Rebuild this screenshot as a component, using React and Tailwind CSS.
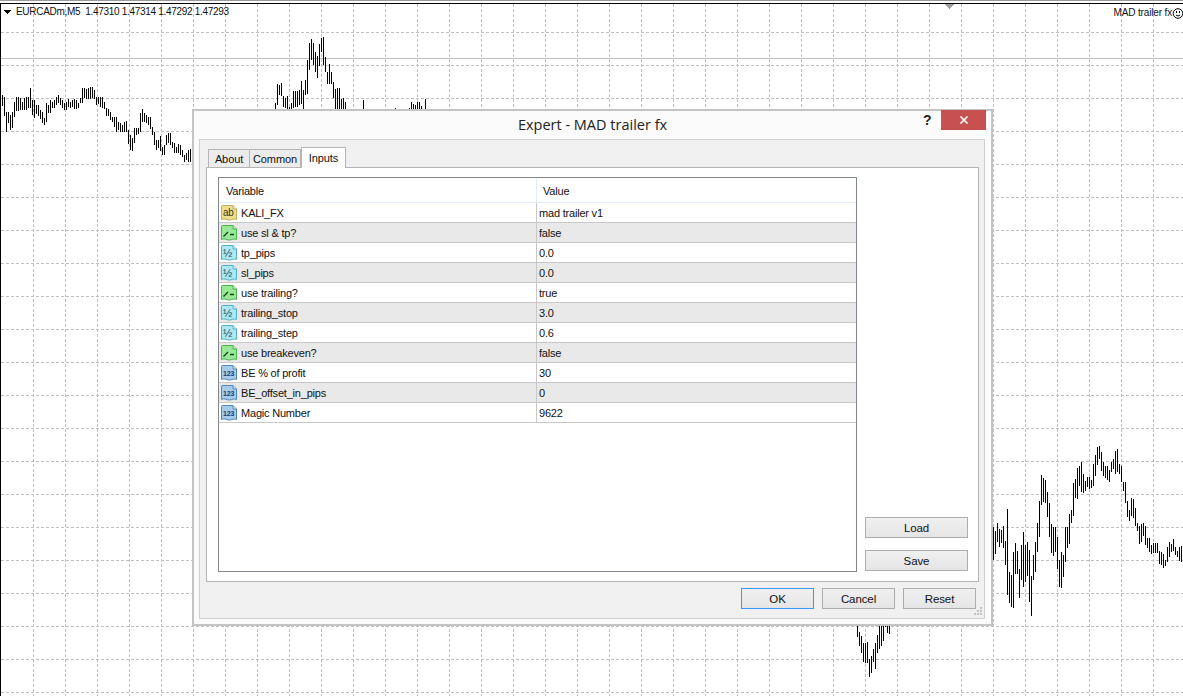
import React from 'react';

const tahoma = "font-['Liberation_Sans',Arial,sans-serif]";

// bars read off the chart as [x, top, bottom] in zoomed units (3x), with a crop origin
const toBars = (ox, oy, list) =>
  list.map(([x, t, b]) => ({ x: Math.round(ox + x / 3), t: oy + t / 3, b: oy + b / 3 }));

const step = (start, pairs) => pairs.map(([t, b], i) => [start + i * 6, t, b]);

const bars = [
  ...toBars(0, 0, step(5, [
    [285, 318], [290, 348], [335, 395], [335, 370], [345, 390], [335, 385], [305, 350], [290, 333], [290, 333], [295, 330],
    [305, 330], [295, 330], [292, 330], [292, 325], [265, 325], [300, 345], [300, 353], [315, 343], [315, 348], [330, 358],
    [335, 370], [355, 375], [310, 365], [315, 340], [300, 340], [305, 325], [300, 325], [290, 315], [285, 310], [295, 315],
    [300, 325], [310, 330], [305, 330], [298, 320], [305, 325], [300, 322], [298, 328], [300, 328], [310, 325], [295, 310],
    [265, 310], [265, 295], [268, 297], [265, 297], [262, 297], [262, 295], [270, 298], [292, 315], [292, 312], [292, 320],
    [292, 325], [305, 328], [325, 348], [328, 348], [335, 360], [350, 365], [352, 380], [350, 395], [365, 390], [370, 395],
    [375, 395], [365, 397], [362, 395], [390, 432], [405, 450], [415, 452], [385, 430], [385, 405], [385, 403], [340, 395],
    [328, 365], [340, 365], [345, 370], [350, 375], [350, 388], [380, 405], [395, 435], [420, 450], [420, 445], [408, 452],
    [440, 465], [435, 465], [405, 435], [400, 430], [400, 435], [425, 445], [430, 458], [440, 460], [432, 460], [435, 465],
    [450, 470], [465, 485], [460, 480], [450, 485], [448, 485],
  ])),
  ...toBars(260, 30, [
    [46, 220, 237], [52, 163, 225], [58, 165, 195], [64, 160, 197], [70, 197, 232], [76, 203, 235], [82, 197, 237], [88, 230, 237],
    [94, 220, 237], [100, 183, 235], [106, 183, 230], [112, 182, 232], [118, 180, 225], [124, 153, 222], [130, 180, 237], [136, 150, 195],
    [142, 90, 193], [148, 40, 120], [154, 28, 90], [160, 38, 105], [166, 65, 125], [172, 78, 143], [178, 42, 108], [184, 25, 65],
    [190, 22, 105], [196, 80, 125], [202, 125, 162], [208, 102, 162], [214, 125, 162], [220, 155, 205], [226, 178, 237], [232, 175, 237],
    [238, 175, 237], [244, 207, 237], [250, 203, 237], [256, 215, 237], [310, 210, 237], [406, 233, 237], [448, 233, 237], [454, 216, 237],
    [460, 222, 237], [466, 225, 237], [472, 216, 237], [478, 216, 237], [484, 228, 237], [496, 207, 237],
  ]),
  ...toBars(990, 430, step(10, [
    [290, 390], [303, 373], [278, 335], [297, 350], [300, 338], [288, 355], [333, 405], [238, 495], [427, 520], [435, 530],
    [365, 535], [340, 433], [362, 433], [418, 505], [345, 450], [307, 470], [345, 455], [337, 438], [360, 517], [438, 557],
    [375, 450], [337, 427], [280, 367], [213, 322], [135, 225], [145, 215], [150, 220], [187, 260], [220, 322], [282, 368],
    [290, 377], [290, 365], [320, 418], [390, 470], [366, 473], [375, 442], [292, 397], [292, 355], [252, 342], [240, 278],
    [158, 257], [147, 205], [113, 207], [108, 167], [97, 187], [132, 190], [152, 182], [142, 172], [142, 177], [150, 175],
    [102, 168], [75, 138], [50, 105], [48, 88], [67, 122], [97, 137], [107, 145], [107, 150], [120, 155], [97, 127],
    [88, 118], [62, 132], [57, 125], [103, 132], [107, 155], [155, 182], [155, 220], [213, 262], [240, 272], [205, 258],
    [207, 265], [235, 288], [278, 302], [288, 342], [283, 335], [280, 318], [287, 345], [325, 355], [325, 365], [345, 373],
    [340, 370], [340, 368], [340, 370], [362, 402], [365, 405], [372, 413], [390, 408], [352, 395], [335, 380], [342, 365],
    [328, 362], [350, 375], [362, 382], [350, 392], [348, 397],
  ])),
  ...toBars(780, 610, step(232, [
    [48, 80], [65, 108], [78, 128], [98, 155], [98, 158], [97, 160], [148, 200], [138, 188], [117, 155], [98, 177],
    [75, 128], [48, 117], [48, 107], [48, 92], [48, 50], [48, 68], [48, 72],
  ])),
];

const vLines = Array.from({ length: 36 }, (_, i) => 33 + i * 32);
const hLines = Array.from({ length: 21 }, (_, i) => 32 + i * 33);

function Chart() {
  return (
    <svg className="absolute inset-0" width="1183" height="696" shapeRendering="crispEdges">
      <rect x="0" y="0" width="1183" height="1" fill="#9a9a9a" />
      <rect x="0" y="3" width="1183" height="1" fill="#000" />
      <rect x="0" y="3" width="1" height="693" fill="#000" />
      {vLines.map((x) => (
        <line key={x} x1={x + 0.5} y1="4" x2={x + 0.5} y2="696" stroke="#c0c0c0" strokeDasharray="3 2" />
      ))}
      {hLines.map((y) => (
        <line key={y} x1="1" y1={y + 0.5} x2="1183" y2={y + 0.5} stroke="#c0c0c0" strokeDasharray="3 2" />
      ))}
      <line x1="1" y1="58.5" x2="1183" y2="58.5" stroke="#c0c0c0" />
      {bars.map((b, i) => (
        <line key={i} x1={b.x + 0.5} y1={b.t} x2={b.x + 0.5} y2={b.b} stroke="#000" />
      ))}
      <polygon points="945,4 954,4 949.5,9" fill="#a0a0a0" />
      <polygon points="4,10 11,10 7.5,14" fill="#000" />
    </svg>
  );
}

function FileIcon({ fill, edge, children }) {
  return (
    <svg width="16" height="16" viewBox="0 0 16 16" className="shrink-0">
      <path
        d="M.5 1.5q0-1 1-1h10.5l3.5 3.5v10.5q-1.8-1-3.6-.3t-3.4.8-3.7-.8-4.3.3z"
        fill={fill}
        stroke={edge}
      />
      <path d="M12 .5v3.5h3.5" fill="#ffffffa0" stroke={edge} />
      {children}
    </svg>
  );
}

const iconText = "font-['Liberation_Sans',Arial,sans-serif]";

function RowIcon({ type }) {
  if (type === 'ab') {
    return (
      <FileIcon fill="#efe08e" edge="#bcae58">
        <text x="2" y="11" fontSize="10" fill="#3a3416" className={iconText}>ab</text>
      </FileIcon>
    );
  }
  if (type === 'bool') {
    return (
      <FileIcon fill="#98e898" edge="#4cb04c">
        <path d="M2.5 11.5l4.5-4.5M9 9.5h4" fill="none" stroke="#0d4d0d" strokeWidth="1.4" />
      </FileIcon>
    );
  }
  if (type === 'half') {
    return (
      <FileIcon fill="#aee8f2" edge="#52b0c6">
        <text x="2" y="11.5" fontSize="11" fill="#0f4c60" className={iconText}>½</text>
      </FileIcon>
    );
  }
  return (
    <FileIcon fill="#a9cbea" edge="#4f86bb">
      <text x="2" y="11" fontSize="7" fontWeight="700" fill="#123f70" className={iconText}>123</text>
    </FileIcon>
  );
}

const rows = [
  ['ab', 'KALI_FX', 'mad trailer v1'],
  ['bool', 'use sl & tp?', 'false'],
  ['half', 'tp_pips', '0.0'],
  ['half', 'sl_pips', '0.0'],
  ['bool', 'use trailing?', 'true'],
  ['half', 'trailing_stop', '3.0'],
  ['half', 'trailing_step', '0.6'],
  ['bool', 'use breakeven?', 'false'],
  ['num', 'BE % of profit', '30'],
  ['num', 'BE_offset_in_pips', '0'],
  ['num', 'Magic Number', '9622'],
];

function Button({ children, className }) {
  return (
    <button className={`h-[21px] border bg-gradient-to-b from-[#f0f0f0] to-[#e5e5e5] pt-[2px] text-[11.5px] tracking-[-0.1px] text-[#111] ${className}`}>
      {children}
    </button>
  );
}

export default function App() {
  return (
    <div className={`relative w-[1183px] h-[696px] overflow-hidden bg-white ${tahoma}`}>
      <Chart />

      <div className="absolute left-[16px] top-[5px] text-[10px] tracking-[-0.3px] leading-[14px] whitespace-pre text-[#111]">
        EURCADm,M5  1.47310 1.47314 1.47292 1.47293
      </div>
      <div className="absolute right-0 top-[6px] flex items-center text-[10px] tracking-[-0.15px] leading-[14px] text-[#111]">
        <span>MAD trailer fx</span>
        <svg width="11" height="13" viewBox="0 0 11 13" className="shrink-0">
          <circle cx="6" cy="6.5" r="4.8" fill="none" stroke="#000" />
          <path d="M3.8 8q2.2 2 4.4 0" fill="none" stroke="#000" />
          <rect x="4" y="4" width="1" height="2" fill="#000" />
          <rect x="7" y="4" width="1" height="2" fill="#000" />
        </svg>
      </div>

      {/* expert properties window */}
      <div className="absolute left-[192px] top-[109px] w-[801px] h-[517px] border-2 border-[#c4c4c4] bg-[#fbfbfb] flex flex-col">
        <div className="relative h-[28px] shrink-0 flex items-center justify-center">
          <span className="font-['Open_Sans',sans-serif] text-[14.5px] text-[#222]">Expert - MAD trailer fx</span>
          <span className="absolute left-[729px] top-[0px] font-['Liberation_Sans',sans-serif] font-bold text-[14px] leading-[18px] text-[#222]">?</span>
          <div className="absolute right-[5px] top-[-1px] w-[45px] h-[20px] bg-[#c75050] flex items-center justify-center">
            <svg width="10" height="10" viewBox="0 0 10 10">
              <path d="M1.5 1.5l7 7M8.5 1.5l-7 7" stroke="#fff" strokeWidth="1.7" />
            </svg>
          </div>
        </div>

        <div className="relative ml-[5px] w-[786px] h-[480px] border border-[#d0d0d0] bg-[#f0f0f0] flex flex-col pl-[6px] pt-[7px]">
          <div className="flex items-end h-[20px] pl-[2px] text-[11px] tracking-[-0.1px] text-[#111] shrink-0">
            <div className="w-[42px] h-[18px] border border-b-0 border-[#b5b5b5] bg-[#ececec] flex items-center justify-center pt-[2px]">About</div>
            <div className="w-[51px] h-[18px] border border-b-0 border-l-0 border-[#b5b5b5] bg-[#ececec] flex items-center justify-center pt-[2px]">Common</div>
            <div className="relative z-10 w-[45px] h-[21px] mb-[-1px] border border-b-0 border-[#b5b5b5] bg-white flex items-start justify-center pt-[2px]">Inputs</div>
          </div>

          <div className="h-[415px] w-[773px] border border-[#b5b5b5] bg-white flex pl-[11px] pt-[9px] pb-[9px] shrink-0">
            <div className="w-[639px] h-[395px] border border-[#82878f] flex flex-col text-[11px] tracking-[-0.2px] text-[#111] shrink-0">
              <div className="h-[25px] flex border-b border-[#e3eefa] shrink-0">
                <div className="w-[318px] pl-[7px] pt-[2px] flex items-center border-r border-[#e3eefa]">Variable</div>
                <div className="pl-[6px] pt-[2px] flex items-center">Value</div>
              </div>
              {rows.map(([type, name, value], i) => (
                <div key={name} className={`h-[20px] flex border-b border-[#c8c8c8] shrink-0 ${i % 2 ? 'bg-[#e9e9e9]' : 'bg-white'}`}>
                  <div className="w-[318px] pl-[2px] flex items-center gap-[4px] border-r border-[#c8c8c8]">
                    <RowIcon type={type} />
                    <span className="pt-[2px]">{name}</span>
                  </div>
                  <div className="pl-[2px] pt-[2px] flex items-center">{value}</div>
                </div>
              ))}
            </div>

            <div className="flex flex-col justify-end gap-[12px] ml-[8px] mb-[1px]">
              <Button className="w-[103px] border-[#adadad]">Load</Button>
              <Button className="w-[103px] border-[#adadad]">Save</Button>
            </div>
          </div>

          <div className="flex justify-end gap-[8px] pr-[8px] pt-[6px]">
            <Button className="w-[73px] border-[#3399ff]">OK</Button>
            <Button className="w-[73px] border-[#adadad]">Cancel</Button>
            <Button className="w-[73px] border-[#adadad]">Reset</Button>
          </div>

          <svg className="absolute right-[1px] bottom-[2px]" width="9" height="9" viewBox="0 0 9 9" shapeRendering="crispEdges">
            <path d="M6 0h2v2H6zM3 3h2v2H3zM6 3h2v2H6zM0 6h2v2H0zM3 6h2v2H3zM6 6h2v2H6z" fill="#c0c0c0" />
          </svg>
        </div>
      </div>
    </div>
  );
}
